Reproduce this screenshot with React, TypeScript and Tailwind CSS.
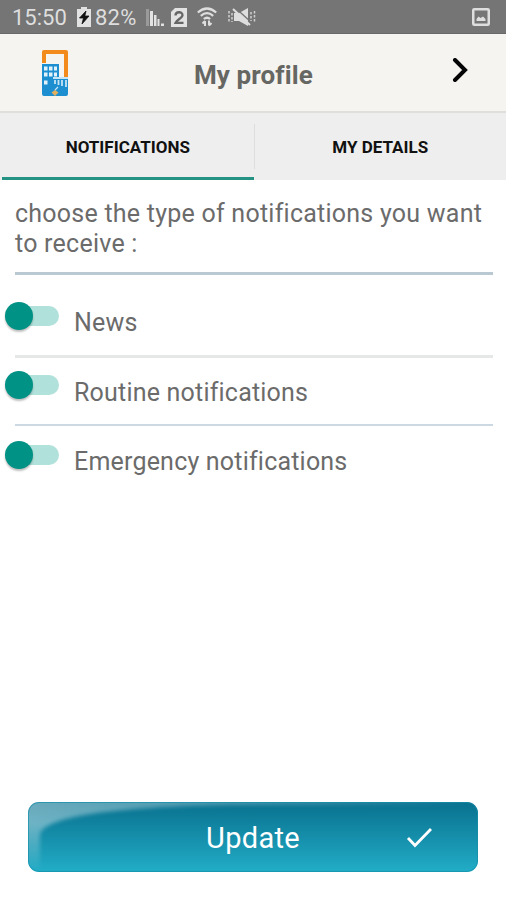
import React, { useState } from 'react';

const OPTIONS = [
  { id: 'news', label: 'News', divider: 'h-[3px] bg-[#e6e8e8]' },
  { id: 'routine', label: 'Routine notifications', divider: 'h-[2px] mb-px bg-[#ccd9e3]' },
  { id: 'emergency', label: 'Emergency notifications', divider: '' },
];

const StatusBar: React.FC = () => (
  <div className="h-[34px] bg-[#757575] border-b border-[#686868] flex items-center pl-3 pr-4 text-[#dedede] text-[22px] leading-none">
    <span className="w-[64px] pt-[3px] whitespace-nowrap">15:50</span>
    <svg className="w-4 h-5 mt-px shrink-0" viewBox="0 0 16 20">
      <path d="M5 0h6v2h4v18H1V2h4z" fill="#e2e2e2" />
      <path d="M10 4 3.500 11h4L6 17l7-8H8.800z" fill="#111" stroke="#111" strokeWidth=".8" />
    </svg>
    <span className="w-[54px] pl-[3px] pt-[3px] whitespace-nowrap tracking-[0.200px]">82%</span>
    <svg className="w-[18px] h-[18px] mt-px shrink-0" viewBox="0 0 18 18" fill="#e2e2e2">
      <path d="M0 1h3v17H0z" fill="#9a9a9a" />
      <path d="M4 3h3v15H4zM8 7h2.500v11H8zM11.500 11h2v7h-2zM15 15.500h3V18h-3z" />
    </svg>
    <svg className="w-4 h-[19px] mt-px ml-[7px] shrink-0" viewBox="0 0 16 19">
      <path d="M4 0h12v19H0V4z" fill="#e2e2e2" />
      <path d="M4.500 7.500C4.500 3.200 11.500 3.200 11.500 7.200C11.500 10 5.500 12 4.500 14.800H12.500" fill="none" stroke="#666" strokeWidth="2.300" />
    </svg>
    <svg className="w-5 h-5 mt-px ml-[10px] shrink-0" viewBox="0 0 20 20" fill="none" stroke="#dedede" strokeWidth="2.200">
      <path d="M.8 5.500Q10-2.500 19.200 5.500M3.800 8.800Q10 3.500 16.200 8.800M6.800 12Q10 9.500 13.200 12" />
      <path d="M8 19v-5M5.500 16.500 8 14M12 13.500v5M14.500 16 12 18.500" strokeWidth="2" />
    </svg>
    <svg className="w-[28px] h-[18px] mt-px ml-[11px] shrink-0" viewBox="0 0 28 18">
      <path d="M6 5h5l9-5v18l-9-5H6z" fill="#dedede" />
      <path d="m7.500 0 16 14.500" stroke="#757575" strokeWidth="1.300" />
      <path d="m5 1 17 16" stroke="#dedede" strokeWidth="2" />
      <path d="M1 3v12M4 5v9M23 4v9M26.500 3v12" stroke="#d0d0d0" strokeWidth="1.500" strokeDasharray="2.500 1.500" />
    </svg>
    <svg className="w-[18px] h-[18px] ml-auto mt-px shrink-0" viewBox="0 0 18 18">
      <rect x="1.250" y="1.250" width="15.500" height="15.500" rx="1" fill="none" stroke="#dedede" strokeWidth="2.500" />
      <path d="M4.500 13v-2l2-2.500 2 1.500L11 8.500l2.500 2.500V13z" fill="#dedede" />
    </svg>
  </div>
);

const Logo: React.FC = () => (
  <svg className="w-7 h-12" viewBox="0 0 28 48">
    <path d="M3 14V3h22v25" fill="none" stroke="#f28a1c" strokeWidth="4" strokeLinejoin="round" />
    <path d="M1 15h17v13h9v17q0 2-2 2H3q-2 0-2-2z" fill="#1d8fd1" />
    <path d="M3 17.500h3.500v4H3zM8 17.500h3.500v4H8zM13 17.500h3v4h-3zM3 23.500h3.500v4H3zM8 23.500h3.500v4H8zM13 23.500h3v4h-3zM3 31.500h3.500v4H3z" fill="#e3f2fa" />
    <path d="M12 29h15M14 31v4M17.500 31v5M21 31v6M25 31v7" stroke="#c5e4f5" strokeWidth="1.800" />
    <path d="m10.500 43.500 3.500 3.500 3.500-3.500-3.500-2.500z" fill="#e0b060" />
    <path d="m14 41 3-3" stroke="#c5e4f5" strokeWidth="1.300" />
  </svg>
);

const Toggle: React.FC<{ active: boolean; onClick: () => void; label: string }> = ({ active, onClick, label }) => (
  <button
    role="switch"
    aria-checked={active}
    aria-label={label}
    onClick={onClick}
    className={`flex items-center w-[54px] h-7 shrink-0 ${active ? '' : 'flex-row-reverse'}`}
  >
    <span className="relative w-7 h-7 rounded-full bg-[#009284] shadow-[0_2px_2px_rgba(0,0,0,0.25)]"></span>
    <span className="grow h-5 -ml-2 rounded-r-full bg-[#b0e1da]"></span>
  </button>
);

const App: React.FC = () => {
  const [tab, setTab] = useState('NOTIFICATIONS');
  const [active, setActive] = useState(['news', 'routine', 'emergency']);

  const toggle = (id: string) =>
    setActive(active.includes(id) ? active.filter((a) => a !== id) : [...active, id]);

  return (
    <div className="w-full h-[900px] bg-white flex flex-col overflow-hidden font-[Roboto,sans-serif]">
      <StatusBar />

      {/* Header */}
      <header className="h-[79px] bg-[#f5f4f0] border-b-2 border-[#dededb] flex items-center pl-[41px] pr-[38px]">
        <Logo />
        <h1 className="ml-[125px] text-[26px] font-bold leading-none text-[#666663] pt-[5px] tracking-[0.100px]">My profile</h1>
        <button aria-label="Next" className="pb-[6px] ml-auto">
          <svg className="w-4 h-6" viewBox="0 0 16 24" fill="none" stroke="#050505" strokeWidth="4">
            <path d="m3 2 10 10L3 22" strokeLinecap="round" />
          </svg>
        </button>
      </header>

      {/* Tabs */}
      <nav className="h-[67px] bg-[#eeeeee] flex">
        {['NOTIFICATIONS', 'MY DETAILS'].map((name, i) => (
          <React.Fragment key={name}>
            {i > 0 && <div className="w-px h-[45px] mt-[11px] bg-[#dddddd]"></div>}
            <button
              onClick={() => setTab(name)}
              className={`flex-1 text-[17px] font-bold text-[#111111] pt-[5px] border-b-3 ${
                i === 0 ? 'ml-[2px]' : ''
              } ${tab === name ? 'border-[#249384]' : 'border-transparent'}`}
            >
              {name}
            </button>
          </React.Fragment>
        ))}
      </nav>

      <main className="flex-1 flex flex-col text-[#6b6b6b] text-[25px]">
        <p className="ml-[15px] mr-[13px] pt-[19px] pb-[14px] leading-[29.500px] tracking-[0.240px] whitespace-nowrap border-b-[3px] border-[#bac8d2]">
          choose the type of notifications you want
          <br />
          to receive :
        </p>

        <ul className="pt-[13px]">
          {OPTIONS.map((option) => (
            <li key={option.id}>
              <div className="h-[66.500px] pt-[13.500px] pl-[5px] flex items-start">
                <Toggle
                  label={option.label}
                  active={active.includes(option.id)}
                  onClick={() => toggle(option.id)}
                />
                <span className="ml-[15px] mt-[6.500px] leading-[30px] tracking-[0.200px]">{option.label}</span>
              </div>
              {option.divider && <div className={`ml-[15px] mr-[13px] ${option.divider}`}></div>}
            </li>
          ))}
        </ul>

        {/* Submit */}
        <button className="relative mt-auto mx-7 mb-7 h-[70px] rounded-[11px] overflow-hidden bg-gradient-to-b from-[#08718f] to-[#22adc7] text-white text-[29px]">
          <svg className="absolute inset-0 w-full h-full" viewBox="0 0 450 70" preserveAspectRatio="none">
            <defs>
              <linearGradient id="gloss" x1="0" y1="0" x2="1" y2="0">
                <stop offset="0" stopColor="#fff" stopOpacity=".4" />
                <stop offset=".45" stopColor="#fff" stopOpacity=".28" />
                <stop offset="1" stopColor="#fff" stopOpacity="0" />
              </linearGradient>
              <linearGradient id="fade" x1="0" y1="0" x2="0" y2="1">
                <stop offset=".3" stopColor="#fff" />
                <stop offset="1" stopColor="#000" />
              </linearGradient>
              <mask id="glossMask">
                <rect width="450" height="70" fill="url(#fade)" />
              </mask>
              <filter id="soft">
                <feGaussianBlur stdDeviation="2" />
              </filter>
            </defs>
            <g mask="url(#glossMask)">
              <path d="M-8-8H450V3H200C90 5 12 14 12 34V70H-8z" fill="url(#gloss)" filter="url(#soft)" />
            </g>
            <rect x=".5" y=".5" width="449" height="69" rx="10.500" fill="none" stroke="#168eaa" strokeOpacity=".7" />
          </svg>
          <span className="relative top-[2px] tracking-[0.300px]">Update</span>
          <svg className="absolute left-[378px] top-[25px] w-[27px] h-[22px]" viewBox="0 0 27 22" fill="none" stroke="#fff" strokeWidth="2.800">
            <path d="m2 11 7 7.500L25 2" />
          </svg>
        </button>
      </main>
    </div>
  );
};

export default App;
